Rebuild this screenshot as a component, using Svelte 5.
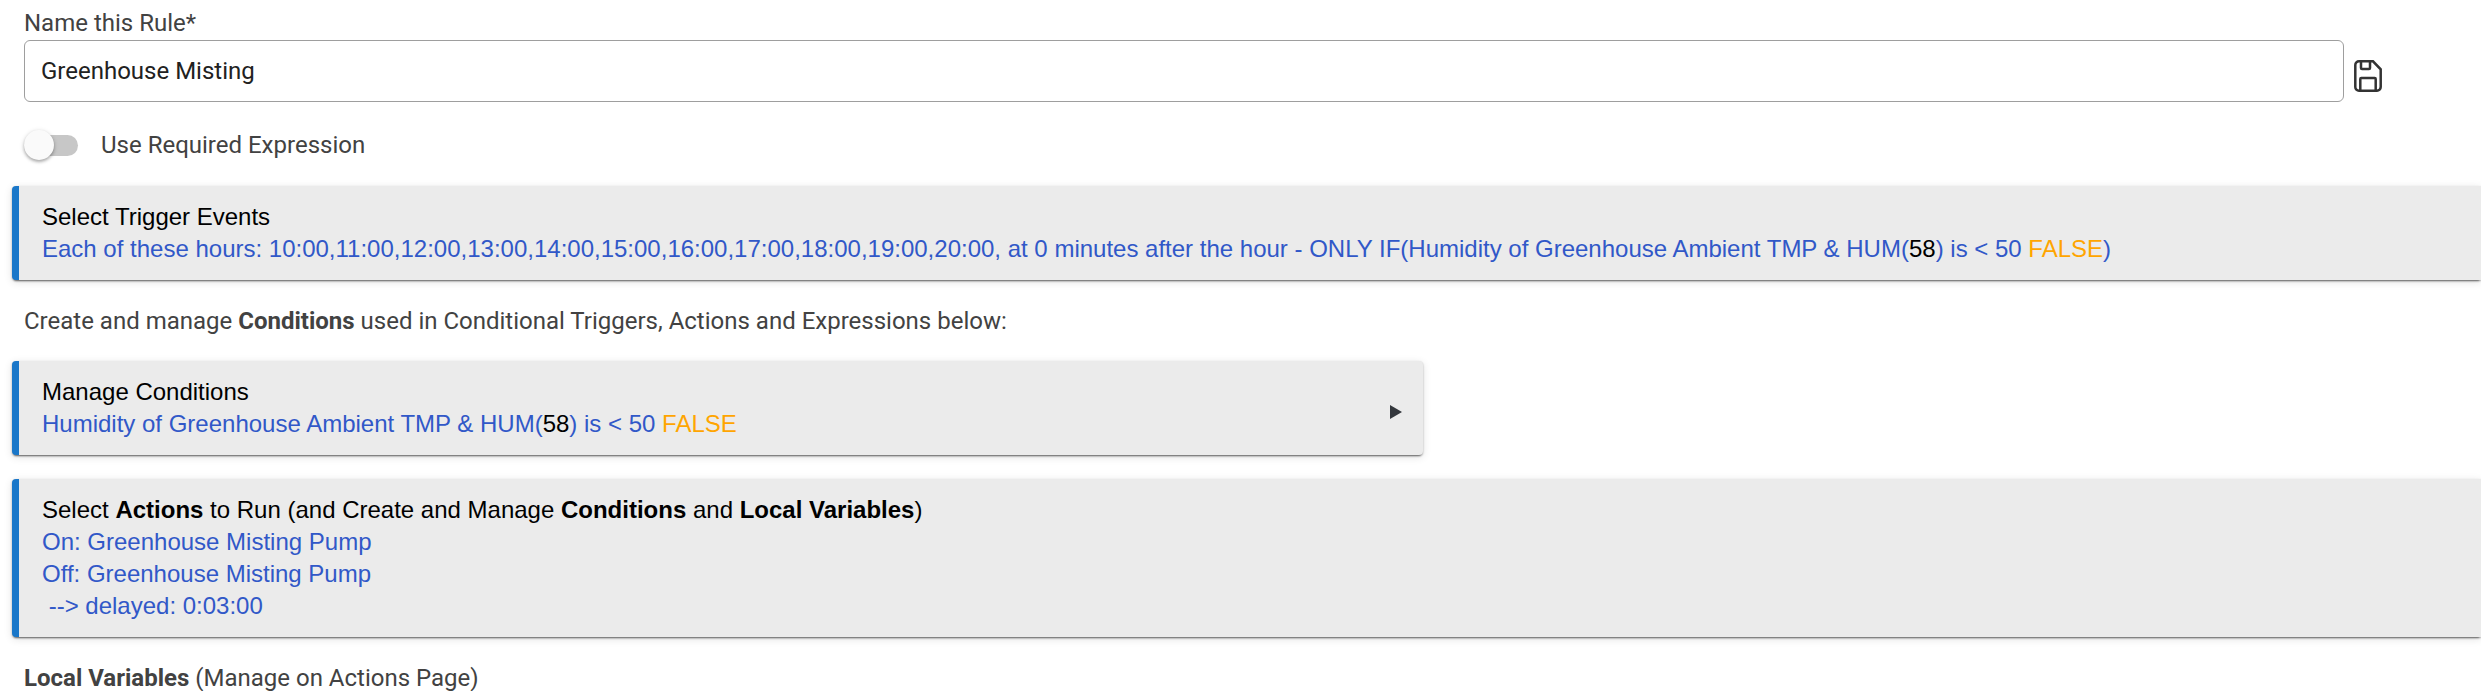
<script>
  let ruleName = "Greenhouse Misting";
  let useRequired = false;

  const hours = Array.from({ length: 11 }, (_, i) => `${i + 10}:00`).join(",");
  const actions = [
    "On: Greenhouse Misting Pump",
    "Off: Greenhouse Misting Pump",
    "\u00a0--> delayed: 0:03:00",
  ];
</script>

<main>
  <div class="name-field">
    <label class="name-label" for="rule-name">Name this Rule*</label>
    <div class="name-row">
      <input id="rule-name" class="name-input" type="text" bind:value={ruleName} />
      <button type="button" class="save-btn" aria-label="Save">
        <svg viewBox="0 0 28 32" width="28" height="32" fill="none" stroke="#333" stroke-width="2.5">
          <path d="M5 1.3h14l7.7 8V27a3.7 3.7 0 0 1-3.7 3.7H5A3.7 3.7 0 0 1 1.3 27V5A3.7 3.7 0 0 1 5 1.3z" />
          <path d="M7 1.3V8a1 1 0 0 0 1 1h7a1 1 0 0 0 1-1V1.3" />
          <path d="M6.3 30.7V19a1 1 0 0 1 1-1h13.4a1 1 0 0 1 1 1v11.7" />
        </svg>
      </button>
    </div>
  </div>

  <label class="switch">
    <input class="switch-input" type="checkbox" bind:checked={useRequired} />
    <span class="switch-track"></span>
    <span>Use Required Expression</span>
  </label>

  <button type="button" class="card">
    <span class="card-body">
      <span class="card-title">Select Trigger Events</span>
      <span>
        Each of these hours: {hours}, at 0 minutes after the hour - ONLY IF(Humidity of Greenhouse
        Ambient TMP &amp; HUM(<span class="value">58</span>) is &lt; 50
        <span class="false">FALSE</span>)
      </span>
    </span>
  </button>

  <p class="note">
    Create and manage <b>Conditions</b> used in Conditional Triggers, Actions and Expressions below:
  </p>

  <div class="columns">
    <button type="button" class="card closed">
      <span class="card-body">
        <span class="card-title">Manage Conditions</span>
        <span>
          Humidity of Greenhouse Ambient TMP &amp; HUM(<span class="value">58</span>) is &lt; 50
          <span class="false">FALSE</span>
        </span>
      </span>
      <svg class="arrow" viewBox="0 0 12 14" width="12" height="14">
        <path d="M0 0l12 7-12 7z" fill="#33373c" />
      </svg>
    </button>
  </div>

  <button type="button" class="card actions">
    <span class="card-body">
      <span class="card-title">
        Select <b>Actions</b> to Run (and Create and Manage <b>Conditions</b> and
        <b>Local Variables</b>)
      </span>
      {#each actions as action}
        <span>{action}</span>
      {/each}
    </span>
  </button>

  <p class="note"><b>Local Variables</b> (Manage on Actions Page)</p>
</main>

<style>
  :global(body) {
    background: #fff;
    overflow: hidden;
  }
  main {
    padding: 7px 0 0 12px;
    font-family: Roboto, sans-serif;
    font-size: 24px;
    line-height: 32px;
    color: #424242;
  }

  .name-field {
    padding: 0 99px 0 12px;
  }
  .name-label {
    display: block;
  }
  .name-row {
    display: flex;
    align-items: center;
    gap: 10px;
    margin-top: 1px;
  }
  .name-input {
    flex: 1;
    min-width: 0;
    box-sizing: border-box;
    height: 62px;
    padding: 0 16px;
    border: 1px solid #9e9e9e;
    border-radius: 6px;
    background: #fff;
    font: inherit;
    color: #212121;
  }
  .save-btn {
    display: flex;
    padding: 10px 0 0;
    border: none;
    background: none;
    cursor: pointer;
  }

  .switch {
    display: flex;
    align-items: center;
    width: fit-content;
    margin: 27px 12px 25px;
    cursor: pointer;
  }
  .switch-input {
    position: absolute;
    opacity: 0;
  }
  .switch-track {
    position: relative;
    width: 54px;
    height: 21px;
    margin-right: 23px;
    border-radius: 11px;
    background: #c7c7c7;
  }
  .switch-track::after {
    content: "";
    position: absolute;
    top: -5px;
    left: 0;
    width: 30px;
    height: 30px;
    border-radius: 50%;
    background: #fafafa;
    box-shadow: 0 2px 3px rgba(0, 0, 0, 0.25), 0 1px 5px rgba(0, 0, 0, 0.15);
  }
  .switch-input:checked + .switch-track::after {
    left: 24px;
  }

  .card {
    display: flex;
    align-items: center;
    justify-content: space-between;
    width: 100%;
    padding: 15px 21px 15px 23px;
    border: none;
    border-left: 7px solid #1a77c9;
    border-radius: 4px 0 0 4px;
    background: #ebebeb;
    box-shadow: 0 3px 2px -2px rgba(0, 0, 0, 0.4), 0 1px 2px rgba(0, 0, 0, 0.3),
      0 2px 8px rgba(0, 0, 0, 0.12);
    font-family: "Liberation Sans", Arial, sans-serif;
    font-size: 24px;
    line-height: 32px;
    text-align: left;
    color: #3158c8;
    cursor: pointer;
  }
  .card.closed {
    border-radius: 4px;
  }
  .card-body {
    display: flex;
    flex-direction: column;
  }
  .card-title,
  .value {
    color: #000;
  }
  .false {
    color: orange;
  }
  .arrow {
    margin-top: 8px;
  }

  .columns {
    display: grid;
    grid-template-columns: 4fr 3fr;
    margin-bottom: 24px;
  }
  .note {
    margin: 25px 12px 24px;
  }
</style>
